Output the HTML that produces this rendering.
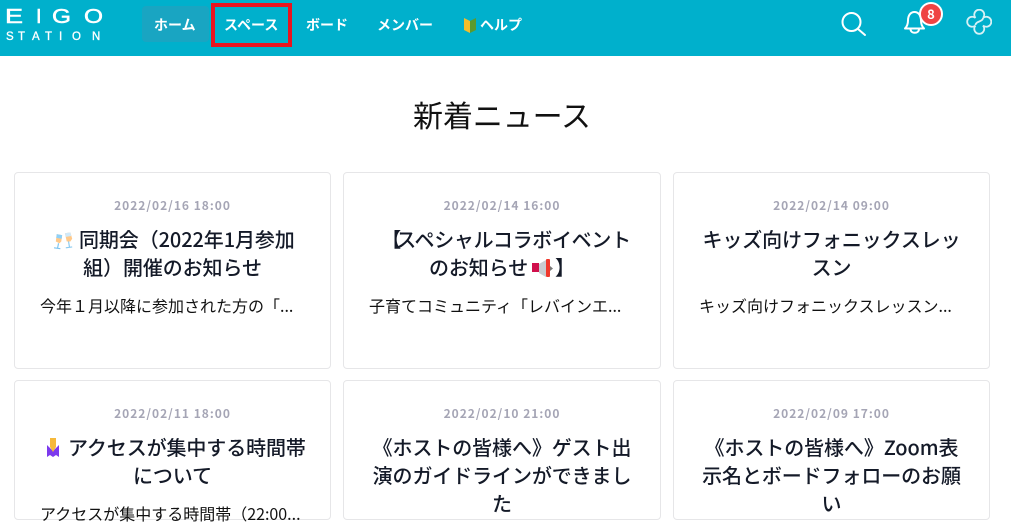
<!DOCTYPE html>
<html lang="ja"><head><meta charset="utf-8"><title>新着ニュース</title>
<style>
*{box-sizing:border-box}
html,body{margin:0;padding:0;width:1011px;height:511px;overflow:hidden;background:#fff;font-family:"Noto Sans CJK JP","Liberation Sans",sans-serif;color:#141a28}
.abs,.c,.d,.t,.b,.n{position:absolute;white-space:nowrap}
header{position:absolute;left:0;top:0;width:1011px;height:56px;background:#00b0cc}
.n{color:#fff;font-weight:700;font-size:14px;line-height:20px;top:15px}
.c{border:1px solid #e6e6e8;border-radius:4px;background:#fff;height:197px}
.d{font-size:12px;font-weight:700;color:#a5a5b5;letter-spacing:1px;line-height:16px;text-align:center}
.t{font-size:20px;line-height:28px;text-align:center;font-weight:500;letter-spacing:-.1px}
.b{font-size:16px;line-height:24px;color:#111}
h1{position:absolute;margin:0;left:0;width:1004px;text-align:center;top:92px;font-size:30px;line-height:44px;font-weight:400;color:#111;letter-spacing:-.1px}
</style></head><body>
<header>
<svg class="abs" style="left:0;top:0" width="110" height="50" font-family="Liberation Sans" fill="#fff" stroke="#fff">
<text x="5" y="23" font-size="20" stroke-width=".5" textLength="18" lengthAdjust="spacingAndGlyphs">E</text>
<text x="36" y="23" font-size="20" stroke-width=".5">I</text>
<text x="52" y="23" font-size="20" stroke-width=".5" textLength="19" lengthAdjust="spacingAndGlyphs">G</text>
<text x="84" y="23" font-size="20" stroke-width=".5" textLength="19" lengthAdjust="spacingAndGlyphs">O</text>
<text x="6 18 32 45 59 72 92" y="40" font-size="11.500" stroke-width=".3">STATION</text>
</svg>
<div class="abs" style="left:142px;top:6px;width:67px;height:36px;background:#19a5c2;border-radius:4px"></div>
<div class="abs" style="left:211px;top:3px;width:81px;height:44px;border:4px solid #e9141f"></div>
<div class="n" style="left:154px">ホーム</div>
<div class="n" style="left:224px">スペース</div>
<div class="n" style="left:306px">ボード</div>
<div class="n" style="left:377px">メンバー</div>
<svg class="abs" style="left:464px;top:17px" width="12" height="16"><path d="M0 1l6 3v12l-6-3z" fill="#f4bd2a"/><path d="M12 1l-6 3v12l6-3z" fill="#5c9a2c"/></svg>
<div class="n" style="left:480px">ヘルプ</div>
<svg class="abs" style="left:840px;top:10px" width="30" height="28" fill="none" stroke="#fff" stroke-width="2"><circle cx="11.500" cy="12" r="9"/><path d="M18 19l7 6" stroke-linecap="round"/></svg>
<svg class="abs" style="left:900px;top:8px" width="28" height="28" fill="none" stroke="#fff" stroke-width="2" stroke-linejoin="round"><path d="M5 20.500c2-2 3-4 3-8 0-5 2.500-8.500 6.500-8.500s6.500 3.500 6.500 8.500c0 4 1 6 3 8z"/><path d="M10.500 21c0 5 8.500 5 8.500 0"/></svg>
<div class="abs" style="left:919px;top:2px;width:24px;height:24px;border-radius:50%;background:#ef4444;border:2px solid #fff;color:#fff;font-weight:700;font-size:13px;line-height:20px;text-align:center">8</div>
<svg class="abs" style="left:966px;top:9px" width="26" height="26" fill="none" stroke="#d6f1f5" stroke-width="1.800"><path d="M9.500 8.500a5 5 0 1 1 7.500 0a5 5 0 1 1 0 7.500a5 5 0 1 1-7.500 0a5 5 0 1 1 0-7.500z" transform="translate(0 .5)"/><path d="M17 9C17 13 9.500 12 9.500 16"/></svg>
</header>
<h1>新着ニュース</h1>

<div class="c" style="left:14px;top:172px;width:317px"></div>
<div class="c" style="left:343px;top:172px;width:318px"></div>
<div class="c" style="left:673px;top:172px;width:317px"></div>
<div class="c" style="left:14px;top:380px;width:317px;height:140px"></div>
<div class="c" style="left:343px;top:380px;width:318px;height:140px"></div>
<div class="c" style="left:673px;top:380px;width:317px;height:140px"></div>

<div class="d" style="left:14px;width:317px;top:198px">2022/02/16 18:00</div>
<svg class="abs" style="left:54px;top:231px" width="20" height="20" viewBox="0 0 22 21"><path d="M3 3l6 1-1 7-2 2-4-2z" fill="#ffc98a"/><path d="M3 3l6 1-.5 4-6-1z" fill="#8fd0f7"/><path d="M5 13l-1 5M0 18l7 1" stroke="#7cc4ef" stroke-width="1.300" fill="none"/><path d="M12 2l6-1 2 7-2 3-4 0z" fill="#ffc98a"/><path d="M12 2l6-1 1 4-6 1z" fill="#cfe9fa"/><path d="M16 11l1 6M13 18l7-1" stroke="#8ccbf0" stroke-width="1.300" fill="none"/></svg>
<div class="t" style="left:79px;top:225px">同期会（2022年1月参加</div>
<div class="t" style="left:14px;width:317px;top:253px">組）開催のお知らせ</div>
<div class="b" style="left:40px;top:293px">今年１月以降に参加された方の「...</div>

<div class="d" style="left:343px;width:318px;top:198px">2022/02/14 16:00</div>
<div class="t" style="left:347px;width:318px;top:225px;letter-spacing:-.3px"><span style="letter-spacing:-5px">【</span>スペシャルコラボイベント</div>
<div class="t" style="left:429px;top:253px">のお知らせ</div>
<svg class="abs" style="left:531px;top:258px" width="22" height="20"><rect x="1" y="5" width="7" height="9" fill="#d0104c"/><path d="M8 6l7-4v17l-7-4z" fill="#c9ccd0"/><rect x="15" y="1" width="4" height="18" rx="1" fill="#f0382c"/><path d="M19 8l3 2.500-3 2.500z" fill="#777"/></svg>
<div class="t" style="left:555px;top:253px">】</div>
<div class="b" style="left:369px;top:293px">子育てコミュニティ「レバインエ...</div>

<div class="d" style="left:673px;width:317px;top:198px">2022/02/14 09:00</div>
<div class="t" style="left:673px;width:317px;top:225px">キッズ向けフォニックスレッ</div>
<div class="t" style="left:673px;width:317px;top:253px">スン</div>
<div class="b" style="left:699px;top:293px">キッズ向けフォニックスレッスン...</div>

<div class="d" style="left:14px;width:317px;top:406px">2022/02/11 18:00</div>
<svg class="abs" style="left:45px;top:437px" width="18" height="22"><path d="M2 8l6 6 6-6v12l-3-2-3 2-3-2-3 2z" fill="#7c3aed"/><path d="M5 1h6v9l-3 5-3-5z" fill="#f6b93b"/></svg>
<div class="t" style="left:68px;top:433px">アクセスが集中する時間帯</div>
<div class="t" style="left:14px;width:317px;top:461px">について</div>
<div class="b" style="left:40px;top:501px">アクセスが集中する時間帯（22:00...</div>

<div class="d" style="left:343px;width:318px;top:406px">2022/02/10 21:00</div>
<div class="t" style="left:343px;width:318px;top:433px">《ホストの皆様へ》ゲスト出</div>
<div class="t" style="left:343px;width:318px;top:461px">演のガイドラインができまし</div>
<div class="t" style="left:343px;width:318px;top:489px">た</div>

<div class="d" style="left:673px;width:317px;top:406px">2022/02/09 17:00</div>
<div class="t" style="left:673px;width:317px;top:433px">《ホストの皆様へ》Zoom表</div>
<div class="t" style="left:673px;width:317px;top:461px">示名とボードフォローのお願</div>
<div class="t" style="left:673px;width:317px;top:489px">い</div>
</body></html>
